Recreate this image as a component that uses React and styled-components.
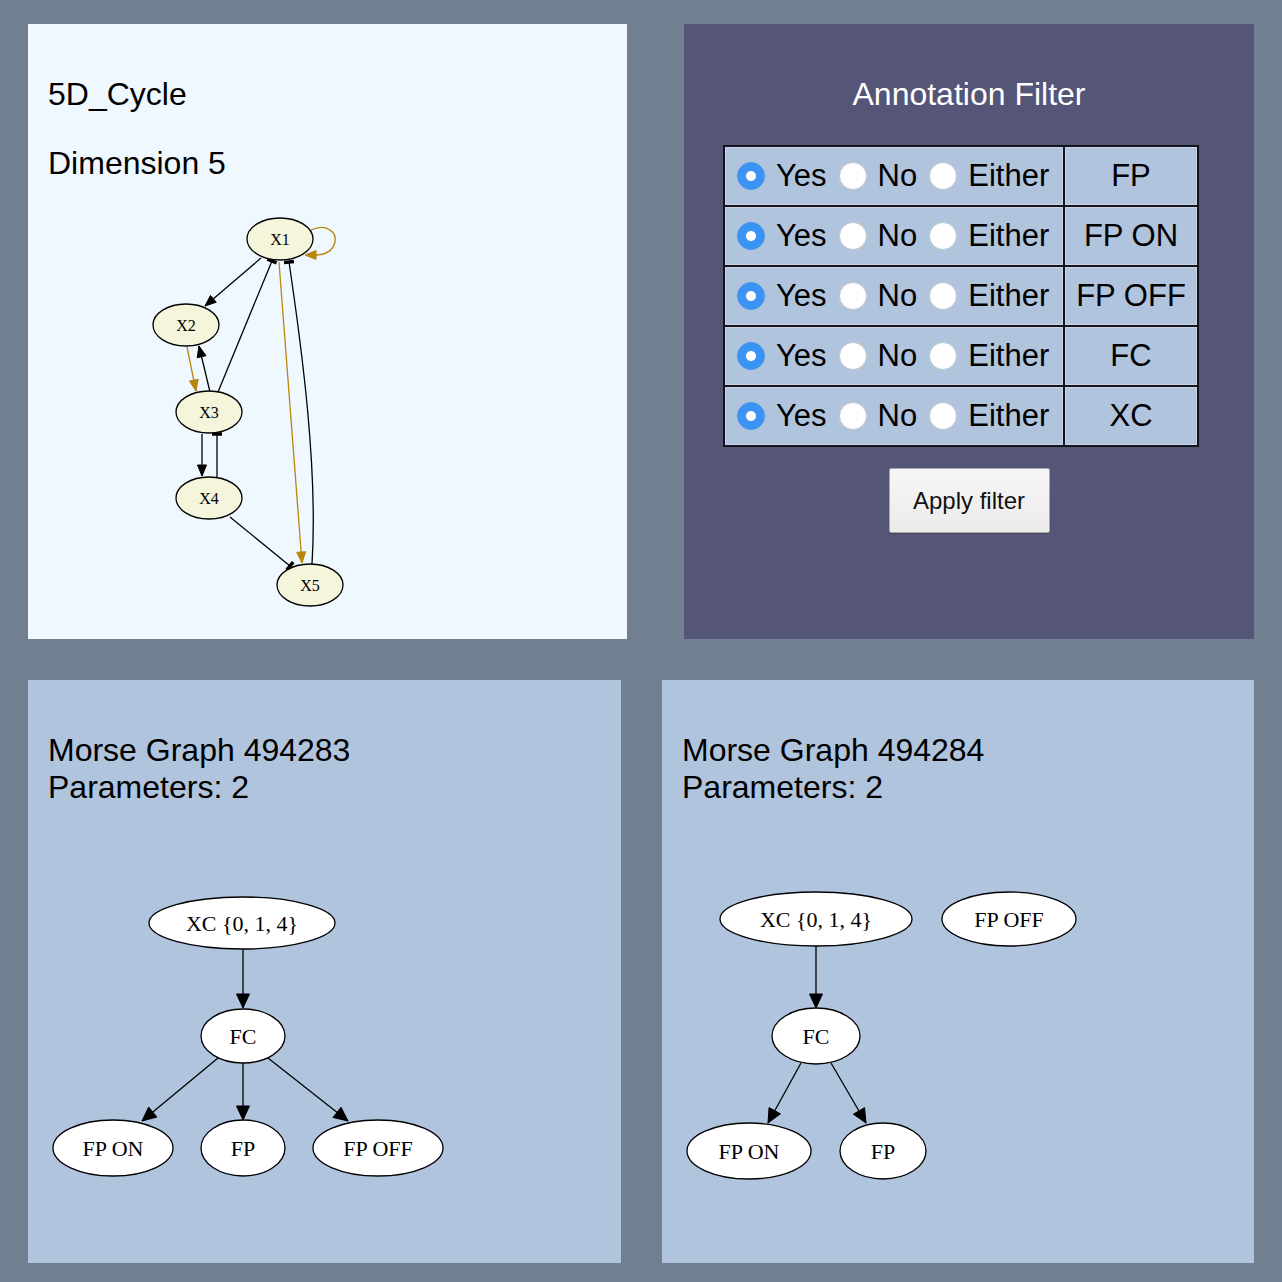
import React from 'react';
import styled, { createGlobalStyle } from 'styled-components';

const GlobalStyle = createGlobalStyle`
  body {
    margin: 0;
    background: #708090;
    font-family: "Liberation Sans", Arial, sans-serif;
  }
`;

const Page = styled.div`
  width: 1282px;
  min-height: 1282px;
  box-sizing: border-box;
  padding: 24px 28px 18px;
  display: flex;
  flex-direction: column;
  gap: 41px;
`;

const Row = styled.div`
  display: flex;
  justify-content: space-between;
`;

const Panel = styled.div`
  width: ${p => p.$w}px;
  height: ${p => p.$h}px;
  box-sizing: border-box;
  padding: 20px;
  background: ${p => p.$bg};
  overflow: hidden;
  display: flow-root;
`;

const Line = styled.p`
  margin: 32px 0;
  font-size: 32px;
  color: ${p => (p.$light ? '#fff' : '#000')};
  text-align: ${p => (p.$center ? 'center' : 'left')};
`;

const GraphSvg = styled.svg`
  display: block;
  overflow: hidden;
`;

const FilterTable = styled.table`
  margin-left: 19px;
  border-collapse: separate;
  border-spacing: 2px;
  background: #141420;
`;

const Cell = styled.td`
  box-sizing: border-box;
  width: ${p => p.$w}px;
  height: 58px;
  padding: 0 0 0 ${p => p.$pad || 0}px;
  border: 1px solid #c9d3e2;
  background: #b0c4de;
  font-size: 31px;
  color: #000;
  text-align: ${p => (p.$center ? 'center' : 'left')};
`;

const Choices = styled.div`
  display: flex;
  align-items: center;
  gap: 12px;
`;

const Choice = styled.label`
  display: flex;
  align-items: center;
  gap: 11px;
`;

const Radio = styled.input.attrs({ type: 'radio' })`
  appearance: none;
  -webkit-appearance: none;
  margin: 0;
  width: 28px;
  height: 28px;
  flex: none;
  border-radius: 50%;
  box-sizing: border-box;
  border: 1px solid #c4c8cf;
  background: #fff;
  &:checked {
    border-color: #3b93f3;
    background: radial-gradient(circle, #fff 0 4.5px, #3b93f3 5.5px);
  }
`;

const ApplyButton = styled.button`
  display: block;
  margin: 21px auto 0;
  width: 161px;
  height: 65px;
  font: 24px "Liberation Sans", Arial, sans-serif;
  color: #111;
  background: linear-gradient(#f6f6f6, #ebebeb);
  border: 1px solid #aaa;
  border-radius: 2px;
  box-shadow: 0 1px 1px rgba(0, 0, 0, 0.2);
`;

const arrowPoints = (x1, y1, x2, y2, len, half) => {
  const d = Math.hypot(x2 - x1, y2 - y1);
  const ux = (x2 - x1) / d;
  const uy = (y2 - y1) / d;
  const bx = x2 - ux * len;
  const by = y2 - uy * len;
  return `${x2},${y2} ${bx - uy * half},${by + ux * half} ${bx + uy * half},${by - ux * half}`;
};

const teeLine = (x1, y1, x2, y2, half) => {
  const d = Math.hypot(x2 - x1, y2 - y1);
  const ux = (x2 - x1) / d;
  const uy = (y2 - y1) / d;
  return { x1: x2 - uy * half, y1: y2 + ux * half, x2: x2 + uy * half, y2: y2 - ux * half };
};

const Graph = ({ box, nodes, edges, font, fill, head }) => {
  const [x, y, w, h] = box;
  return (
    <GraphSvg width={w} height={h} viewBox={`${x} ${y} ${w} ${h}`}>
      {edges.map((e, i) => {
        const color = e.c || '#000';
        const [sx, sy] = e.from;
        const [tx, ty] = e.to;
        const path = e.d || `M${sx},${sy} L${tx},${ty}`;
        const [px, py] = e.dir || [sx, sy];
        return (
          <g key={i}>
            <path d={path} fill="none" stroke={color} strokeWidth="1.3" />
            {e.tee ? (
              <line {...teeLine(px, py, tx, ty, 5)} stroke={color} strokeWidth="3.5" />
            ) : (
              <polygon points={arrowPoints(px, py, tx, ty, head[0], head[1])} fill={color} stroke={color} strokeWidth="1" />
            )}
          </g>
        );
      })}
      {nodes.map(n => (
        <g key={n.label}>
          <ellipse cx={n.x} cy={n.y} rx={n.rx} ry={n.ry} fill={fill} stroke="#000" strokeWidth="1.3" />
          <text
            x={n.x}
            y={n.y}
            dy="0.35em"
            textAnchor="middle"
            fontFamily='"Liberation Serif", "Times New Roman", serif'
            fontSize={font}
            fill="#000"
          >
            {n.label}
          </text>
        </g>
      ))}
    </GraphSvg>
  );
};

const gold = '#b8860b';

const networkNodes = [
  { label: 'X1', x: 280, y: 239, rx: 33, ry: 21 },
  { label: 'X2', x: 186, y: 325, rx: 33, ry: 21 },
  { label: 'X3', x: 209, y: 412, rx: 33, ry: 21 },
  { label: 'X4', x: 209, y: 498, rx: 33, ry: 21 },
  { label: 'X5', x: 310, y: 585, rx: 33, ry: 21 },
];

const networkEdges = [
  { from: [311, 230], to: [305, 255], c: gold, d: 'M311,230 C326,223 337,232 335,242 C333,251 325,255 316,255', dir: [317, 255] },
  { from: [261, 258], to: [205, 306] },
  { from: [210, 392], to: [199, 346] },
  { from: [187, 347], to: [196, 391], c: gold },
  { from: [218, 392], to: [272, 261], tee: true },
  { from: [279, 262], to: [302, 563], c: gold },
  { from: [312, 564], to: [289, 262], tee: true, d: 'M312,564 C318,470 302,350 289,262', dir: [292, 290] },
  { from: [202, 434], to: [202, 476] },
  { from: [217, 477], to: [217, 434], tee: true },
  { from: [230, 517], to: [290, 566], tee: true },
];

const morseA = {
  nodes: [
    { label: 'XC {0, 1, 4}', x: 242, y: 923, rx: 93, ry: 26 },
    { label: 'FC', x: 243, y: 1036, rx: 42, ry: 27 },
    { label: 'FP ON', x: 113, y: 1148, rx: 60, ry: 28 },
    { label: 'FP', x: 243, y: 1148, rx: 42, ry: 28 },
    { label: 'FP OFF', x: 378, y: 1148, rx: 65, ry: 28 },
  ],
  edges: [
    { from: [243, 949], to: [243, 1008] },
    { from: [218, 1058], to: [142, 1121] },
    { from: [243, 1063], to: [243, 1120] },
    { from: [268, 1058], to: [348, 1121] },
  ],
};

const morseB = {
  nodes: [
    { label: 'XC {0, 1, 4}', x: 816, y: 919, rx: 96, ry: 27 },
    { label: 'FP OFF', x: 1009, y: 919, rx: 67, ry: 27 },
    { label: 'FC', x: 816, y: 1036, rx: 44, ry: 28 },
    { label: 'FP ON', x: 749, y: 1151, rx: 62, ry: 28 },
    { label: 'FP', x: 883, y: 1151, rx: 43, ry: 28 },
  ],
  edges: [
    { from: [816, 946], to: [816, 1008] },
    { from: [801, 1063], to: [768, 1123] },
    { from: [831, 1063], to: [866, 1123] },
  ],
};

const annotations = ['FP', 'FP ON', 'FP OFF', 'FC', 'XC'];

const FilterRow = ({ name }) => (
  <tr>
    <Cell $w={338} $pad={11}>
      <Choices>
        <Choice>
          <Radio name={name} defaultChecked />
          Yes
        </Choice>
        <Choice>
          <Radio name={name} />
          No
        </Choice>
        <Choice>
          <Radio name={name} />
          Either
        </Choice>
      </Choices>
    </Cell>
    <Cell $w={132} $center>
      {name}
    </Cell>
  </tr>
);

export default function App() {
  return (
    <>
      <GlobalStyle />
      <Page>
        <Row>
          <Panel $w={599} $h={615} $bg="#f0f8ff">
            <Line>5D_Cycle</Line>
            <Line>Dimension 5</Line>
            <Graph box={[48, 214, 559, 405]} nodes={networkNodes} edges={networkEdges} font={16} fill="#f5f5dc" head={[11, 4.5]} />
          </Panel>
          <Panel $w={570} $h={615} $bg="#555577">
            <Line $light $center>Annotation Filter</Line>
            <FilterTable>
              <tbody>
                {annotations.map(a => (
                  <FilterRow key={a} name={a} />
                ))}
              </tbody>
            </FilterTable>
            <ApplyButton>Apply filter</ApplyButton>
          </Panel>
        </Row>
        <Row>
          <Panel $w={593} $h={583} $bg="#b0c4de">
            <Line>
              Morse Graph 494283
              <br />
              Parameters: 2
            </Line>
            <Graph box={[48, 838, 553, 405]} nodes={morseA.nodes} edges={morseA.edges} font={22} fill="#fff" head={[14, 6.5]} />
          </Panel>
          <Panel $w={592} $h={583} $bg="#b0c4de">
            <Line>
              Morse Graph 494284
              <br />
              Parameters: 2
            </Line>
            <Graph box={[682, 838, 552, 405]} nodes={morseB.nodes} edges={morseB.edges} font={22} fill="#fff" head={[14, 6.5]} />
          </Panel>
        </Row>
      </Page>
    </>
  );
}
